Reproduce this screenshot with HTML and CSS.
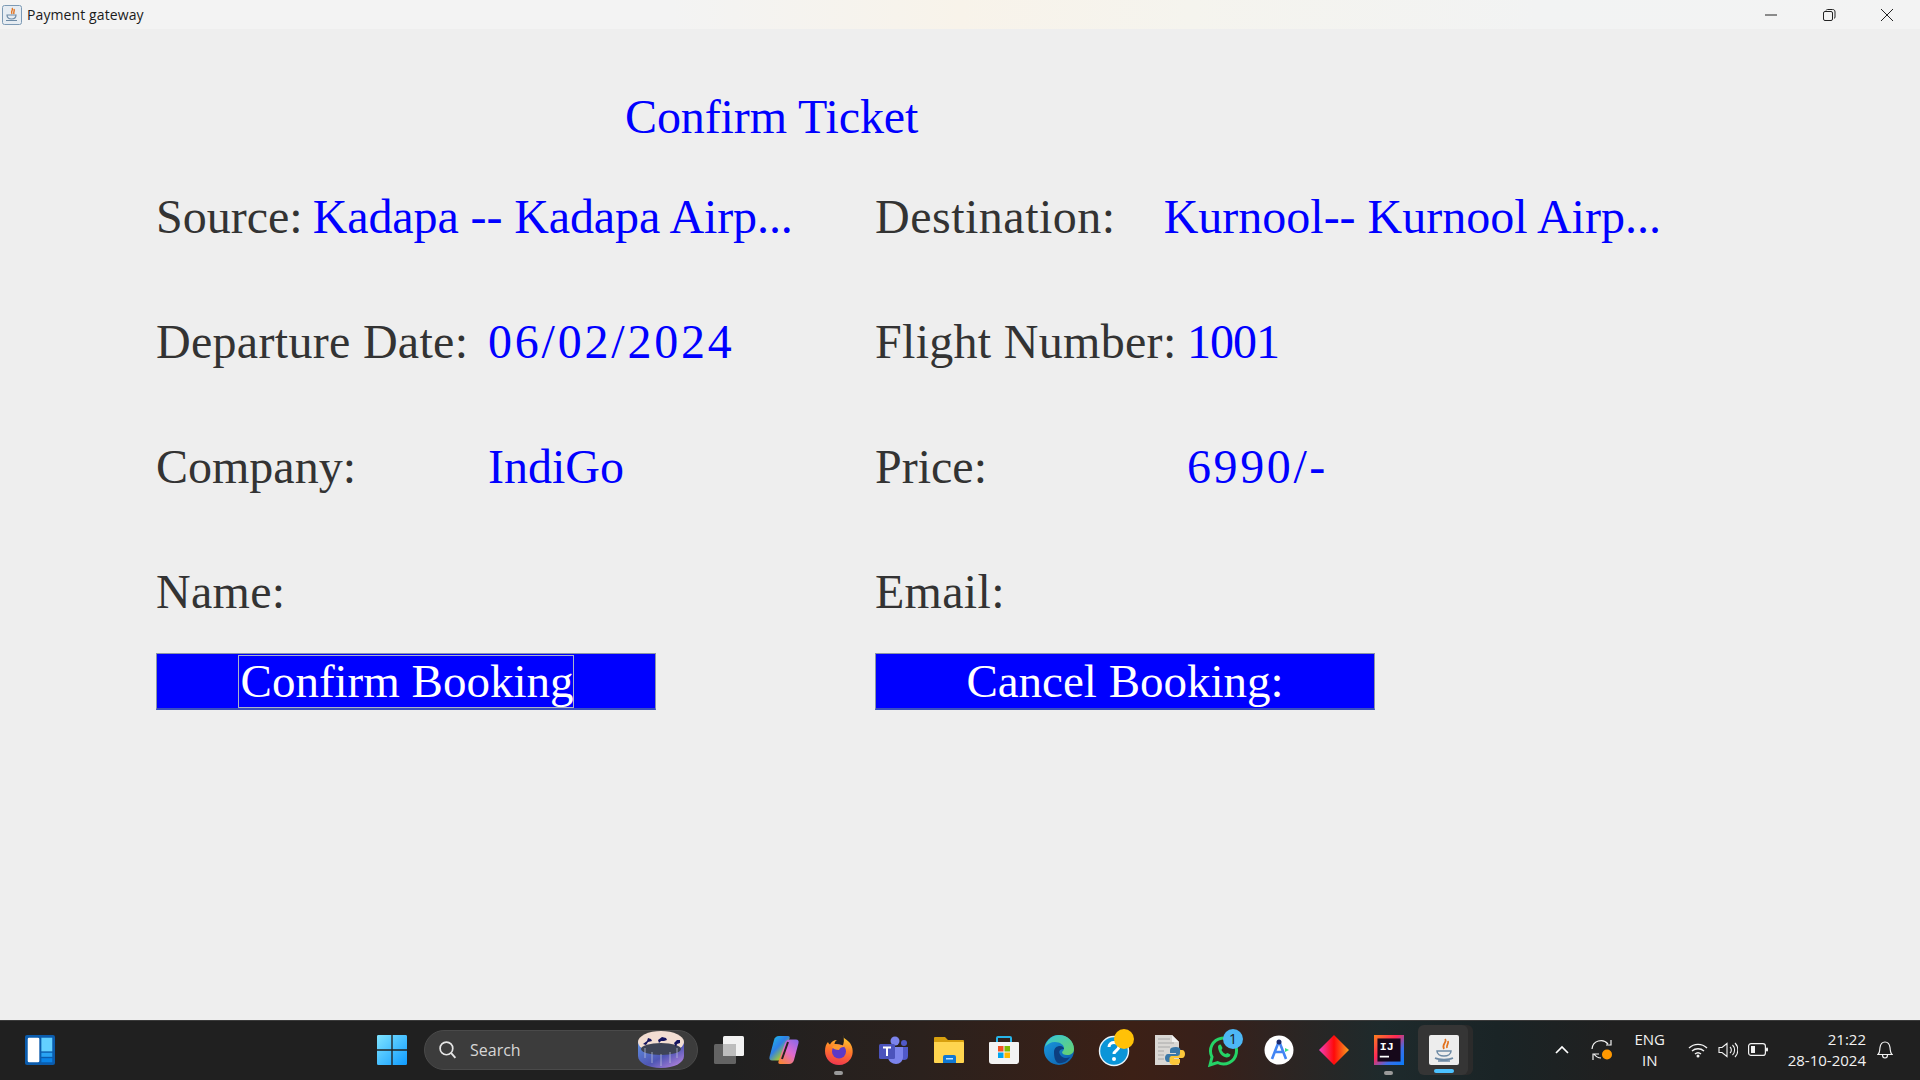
FILE: index.html
```html
<!DOCTYPE html>
<html lang="en">
<head>
<meta charset="utf-8">
<title>Payment gateway</title>
<link rel="stylesheet" href="styles.css">
</head>
<body>
<header class="titlebar">
  <svg class="app-icon" viewBox="0 0 20 20"><rect x=".5" y=".5" width="19" height="19" rx="2" fill="#e6ecf2" stroke="#7d9ab5"/><path d="M10 3c2 2-2 3 0 6M12 4c1 2-1 3 0 5" stroke="#e2711d" fill="none" stroke-width="1.4"/><path d="M5 10h9c0 3-2 4-4.500 4S5 13 5 10zM4 15.500h11" stroke="#6d8aa5" fill="none" stroke-width="1.200"/></svg>
  <span class="window-title">Payment gateway</span>
  <div class="window-controls">
    <svg class="win-btn" viewBox="0 0 14 14"><path d="M1 7h12" stroke="#222" stroke-width="1"/></svg>
    <svg class="win-btn" viewBox="0 0 14 14"><rect x="1.500" y="3.500" width="9" height="9" rx="1.500" fill="none" stroke="#222"/><path d="M4 2.500c.3-.7.8-1 1.500-1h5c1.700 0 2.500.8 2.500 2.500v5c0 .7-.3 1.200-1 1.500" fill="none" stroke="#222"/></svg>
    <svg class="win-btn" viewBox="0 0 14 14"><path d="M1 1l12 12M13 1L1 13" stroke="#222" stroke-width="1"/></svg>
  </div>
</header>

<main class="content">
  <h1 class="heading">Confirm Ticket</h1>
  <div class="info-grid">
    <div class="field"><span class="label">Source:</span><span class="value value-source">Kadapa -- Kadapa Airp...</span></div>
    <div class="field"><span class="label label-wider">Destination:</span><span class="value value-dest">Kurnool-- Kurnool Airp...</span></div>
    <div class="field"><span class="label label-wide label-left">Departure Date:</span><span class="value value-date">06/02/2024</span></div>
    <div class="field"><span class="label label-wide label-right">Flight Number:</span><span class="value value-narrow">1001</span></div>
    <div class="field"><span class="label label-left">Company:</span><span class="value">IndiGo</span></div>
    <div class="field"><span class="label label-right">Price:</span><span class="value value-price">6990/-</span></div>
    <div class="field"><span class="label label-wide">Name:</span></div>
    <div class="field"><span class="label label-wide">Email:</span></div>
  </div>
  <div class="actions">
    <button class="action"><span class="focus-ring">Confirm Booking</span></button>
    <button class="action"><span class="plain-label">Cancel Booking:</span></button>
  </div>
</main>

<footer class="taskbar">
  <svg class="widgets" viewBox="0 0 22 22"><rect width="22" height="22" rx="1.500" fill="#0b5cad"/><rect x="2" y="2" width="8.500" height="18" rx="1" fill="#fff"/><rect x="12" y="2" width="8" height="10" fill="#63d0ff"/><rect x="12" y="13" width="8" height="3" fill="#2aa4f4"/><rect x="12" y="17" width="8" height="3" fill="#0a84e8"/></svg>
  <div class="centre">
    <svg class="start" viewBox="0 0 22 22"><defs><linearGradient id="w" x1="0" y1="0" x2="1" y2="1"><stop offset="0" stop-color="#7fe4ff"/><stop offset="1" stop-color="#0f9bff"/></linearGradient></defs><path fill="url(#w)" d="M0 1a1 1 0 0 1 1-1h9.500v10.500H0zM11.500 0H21a1 1 0 0 1 1 1v9.500H11.500zM0 11.500h10.500V22H1a1 1 0 0 1-1-1zM11.500 11.500H22V21a1 1 0 0 1-1 1h-9.500z"/></svg>
    <div class="search">
      <svg class="search-icon" viewBox="0 0 18 18"><circle cx="8" cy="8" r="6" fill="none" stroke="#e6e6e6" stroke-width="1.600"/><path d="M12.500 12.500l4 4.500" stroke="#e6e6e6" stroke-width="1.800"/></svg>
      <span class="search-text">Search</span>
      <svg class="search-art" viewBox="0 0 48 40"><defs><linearGradient id="sa" x1="0" y1="0" x2="1" y2="1"><stop offset="0" stop-color="#5f8fe0"/><stop offset=".55" stop-color="#4f56b4"/><stop offset="1" stop-color="#c68be4"/></linearGradient></defs><path d="M1 12v14c0 7 10 12 23 12s23-5 23-12V12z" fill="url(#sa)"/><ellipse cx="24" cy="12" rx="23" ry="11" fill="#f2ddd2"/><ellipse cx="24" cy="19" rx="20" ry="6" fill="#3e4456"/><path d="M8 18v10M15 22v11M24 24v12M33 22v11M40 18v10" stroke="#c5cbe2" stroke-width="1" opacity=".7"/><path d="M6 14l4-3 1-3 3 1 1 2-4 1-2 3zM21 10l4-3 4 1 1 2-3 1-3 0-2 2zM37 13l3-3 3 0 0 3-3 1-1 3z" fill="#14145f"/></svg>
    </div>
    <div class="app-slot"><svg class="tb-icon" viewBox="0 0 30 30"><rect x="9" y="1" width="21" height="20" rx="1.500" fill="#f2f2f2"/><rect x="0" y="9" width="22" height="20" rx="1.500" fill="#6a6a6a" opacity=".9"/><rect x="9" y="9" width="13" height="12" fill="#bdbdbd"/></svg></div>
    <div class="app-slot"><svg class="tb-icon" viewBox="0 0 30 30"><defs><linearGradient id="c1" x1="0" y1="0" x2=".9" y2="1"><stop offset="0" stop-color="#19c4e8"/><stop offset=".45" stop-color="#2f7fe8"/><stop offset=".75" stop-color="#a0c43a"/><stop offset="1" stop-color="#f2c230"/></linearGradient><linearGradient id="c2" x1=".9" y1="0" x2=".2" y2="1"><stop offset="0" stop-color="#8a6ae8"/><stop offset=".5" stop-color="#e06ad0"/><stop offset="1" stop-color="#f9853a"/></linearGradient></defs><path d="M10 1h9c1.500 0 2 1 1.500 2.500L14 22c-1 2.500-2.500 3.500-5 3.500H3c-2 0-3-1.500-2.500-3.500L5 5c.8-2.500 2.500-4 5-4z" fill="url(#c1)"/><path d="M20 29h-9c-1.500 0-2-1-1.500-2.500L16 8c1-2.500 2.500-3.500 5-3.500h6c2 0 3 1.500 2.500 3.500L25 25c-.8 2.500-2.500 4-5 4z" fill="url(#c2)"/><path d="M19 7l-6 17" stroke="#2a2020" stroke-width="2"/></svg></div>
    <div class="app-slot has-dot"><svg class="tb-icon" viewBox="0 0 30 30"><defs><linearGradient id="ff" x1=".6" y1="0" x2=".4" y2="1"><stop offset="0" stop-color="#ffd02e"/><stop offset=".5" stop-color="#ff7a2a"/><stop offset="1" stop-color="#f0364f"/></linearGradient></defs><path d="M19 0c0 4 4 4 7 8 3 4 4 11 .5 16-3 4-7 6-11.500 6C7 30 1 24 1 16c0-4 1-7 3-9 .3 1 1 2 2 2.500C7 7 10 5 13 5c-1.500 1-2.500 2.500-2.500 4 4 0 6 .5 8 2.500 1.500-3.500 2-7 .5-11.500z" fill="url(#ff)"/><circle cx="15" cy="16.500" r="7" fill="#5d39c6"/><path d="M8 12c3-3 9-3.500 13 0-3-.5-5 .5-6 3-3 0-6-1-7-3z" fill="#ff9a2e"/></svg></div>
    <div class="app-slot"><svg class="tb-icon" viewBox="0 0 30 30"><circle cx="16" cy="6" r="4.500" fill="#7b83eb"/><circle cx="25" cy="8" r="3" fill="#5059c9"/><path d="M21 12h8v9c0 3-2 4-4 4s-4-1-4-4z" fill="#5059c9"/><path d="M9 12h15v10c0 4-3 7-7 7s-8-3-8-7z" fill="#7b83eb"/><rect x="0" y="9" width="16" height="15" rx="1.500" fill="#4b53bc"/><path d="M4 12.500h8M8 12.500v8.500" stroke="#fff" stroke-width="2"/></svg></div>
    <div class="app-slot"><svg class="tb-icon" viewBox="0 0 30 30"><path d="M0 3a1 1 0 0 1 1-1h10l3 3h15a1 1 0 0 1 1 1v4H0z" fill="#d8a00e"/><path d="M0 7h29a1 1 0 0 1 1 1v19a1 1 0 0 1-1 1H1a1 1 0 0 1-1-1z" fill="#ffd54f"/><path d="M9 28v-6a2 2 0 0 1 2-2h9a2 2 0 0 1 2 2v6z" fill="#0f78d4"/><rect x="12" y="23" width="7" height="1.500" fill="#bfe3ff"/></svg></div>
    <div class="app-slot"><svg class="tb-icon" viewBox="0 0 30 30"><path d="M8 7V3a1 1 0 0 1 1-1h12a1 1 0 0 1 1 1v4" fill="none" stroke="#27b4e8" stroke-width="2"/><path d="M1 7h28a1 1 0 0 1 1 1v18a3 3 0 0 1-3 3H3a3 3 0 0 1-3-3V8a1 1 0 0 1 1-1z" fill="#f3f3f3"/><rect x="9" y="11" width="5.500" height="5.500" fill="#f25022"/><rect x="15.500" y="11" width="5.500" height="5.500" fill="#7fba00"/><rect x="9" y="17.500" width="5.500" height="5.500" fill="#00a4ef"/><rect x="15.500" y="17.500" width="5.500" height="5.500" fill="#ffb900"/></svg></div>
    <div class="app-slot"><svg class="tb-icon" viewBox="0 0 30 30"><defs><linearGradient id="e1" x1="0" y1="0" x2="1" y2="1"><stop offset="0" stop-color="#36c6d8"/><stop offset="1" stop-color="#6ad36a"/></linearGradient><linearGradient id="e2" x1="0" y1="0" x2="1" y2="1"><stop offset="0" stop-color="#1b9de2"/><stop offset="1" stop-color="#0c5aa8"/></linearGradient></defs><circle cx="15" cy="15" r="15" fill="url(#e2)"/><path d="M1 12C3 4 9 0 15 0c8 0 15 6 15 14 0 4-3 6-7 6-3 0-5-1-5-3 1-1 2-2 2-4 0-3-4-6-9-6-4 0-8 2-10 5z" fill="url(#e1)"/><path d="M10 17c0-4 3-6 6-6 3 0 4 2 4 3-5 0-6 3-3 7 2 2 6 3 9 1-3 5-8 7-12 6-3-2-4-6-4-11z" fill="#0d3f80"/></svg></div>
    <div class="app-slot"><svg class="tb-icon over" viewBox="0 0 30 30"><circle cx="15" cy="16" r="14.500" fill="#0a95d8" stroke="#e8f4fb" stroke-width="1.400"/><path d="M10 12c0-3 2.500-4.500 5-4.500s5 1.500 5 4c0 4-5 4-5 7.500" fill="none" stroke="#fff" stroke-width="3"/><circle cx="15" cy="24" r="2" fill="#fff"/><circle cx="25" cy="4" r="10" fill="#ffc107"/></svg></div>
    <div class="app-slot"><svg class="tb-icon over" viewBox="0 0 30 30"><path d="M1 0h17l7 7v23H1z" fill="#d9d7d4"/><path d="M18 0v7h7z" fill="#f2f2f2"/><path d="M4 4h12M4 8h16M4 12h12M4 16h6M4 20h6M4 24h6" stroke="#a8a8a8" stroke-width="1"/><path d="M22 12c-4 0-6 1-6 3v3h6v1h-8c-2 0-3 2-3 4s1 4 3 4h2v-3c0-2 1-3 3-3h5c1.500 0 2.500-1 2.500-2.500V15c0-2-2-3-4.500-3z" fill="#3a78a8"/><path d="M22 12c-4 0-6 1-6 3v3h6v1h-8c-2 0-3 2-3 4s1 4 3 4h2v-3c0-2 1-3 3-3h5c1.500 0 2.500-1 2.500-2.500V15c0-2-2-3-4.500-3z" fill="#fcc73a" transform="rotate(180 21 21)"/></svg></div>
    <div class="app-slot"><svg class="tb-icon over" viewBox="0 0 30 30"><path d="M1 30l2-8a13 13 0 1 1 5.500 5.500z" fill="none" stroke="#25d366" stroke-width="3"/><path d="M9 12c0-2 2-3 3-2l1.500 3-1 2c1 2 2 3 4 4l2-1 3 1.500c0 2-2 3-4 3-5-1-8-5-8.500-10.500z" fill="#25d366"/><circle cx="24" cy="4" r="10" fill="#4db7f5"/><text class="badge-text" x="24" y="9">1</text></svg></div>
    <div class="app-slot"><svg class="tb-icon" viewBox="0 0 30 30"><circle cx="15" cy="15" r="14.500" fill="#fff"/><path d="M15 6L8 24M15 6l7 18M10 17h10" stroke="#4285f4" stroke-width="2.600" fill="none"/><circle cx="15" cy="7" r="2.500" fill="#1a2a6e"/><path d="M21 13l4 2-4 2z" fill="#3ddc84"/></svg></div>
    <div class="app-slot"><svg class="tb-icon" viewBox="0 0 30 30"><defs><linearGradient id="rd" x1="0" y1="0" x2="1" y2="0"><stop offset="0" stop-color="#f040c0"/><stop offset=".5" stop-color="#ff0a0a"/><stop offset="1" stop-color="#f8a020"/></linearGradient></defs><path d="M15 0l15 15-15 15L0 15z" fill="url(#rd)"/></svg></div>
    <div class="app-slot has-dot"><svg class="tb-icon" viewBox="0 0 26 26"><defs><linearGradient id="ij" x1="0" y1="0" x2="1" y2="1"><stop offset="0" stop-color="#fc801d"/><stop offset=".4" stop-color="#fe2857"/><stop offset=".7" stop-color="#3a6fe8"/><stop offset="1" stop-color="#087cfa"/></linearGradient></defs><rect width="26" height="26" fill="url(#ij)"/><rect x="3" y="3" width="20" height="20" fill="#16081a"/><text class="ij-text" x="5" y="13">IJ</text><rect x="5" y="18" width="8" height="1.500" fill="#fff"/></svg></div>
    <div class="app-slot active"><svg class="tb-icon" viewBox="0 0 30 30"><rect width="30" height="30" rx="2" fill="#ededed"/><path d="M16 4c3 3-4 5-1 10M19 6c1 3-2 4-1 7" fill="none" stroke="#e2711d" stroke-width="1.700"/><path d="M8 16h14c0 3-3 5-7 5s-7-2-7-5zM6 23c4 2 14 2 18 0M9 26h12" fill="none" stroke="#6d8aa5" stroke-width="1.500"/></svg></div>
  </div>
  <div class="tray">
    <svg class="tray-chev" viewBox="0 0 14 9"><path d="M1 8l6-6 6 6" fill="none" stroke="#fff" stroke-width="1.700"/></svg>
    <svg class="tray-sync" viewBox="0 0 22 22"><path d="M1 10a9 9 0 0 1 16-5M20 1v5h-5M3 15a9 9 0 0 0 7 4M2 21v-6h6" fill="none" stroke="#f2f2f2" stroke-width="1.200"/><circle cx="16" cy="15.500" r="5" fill="#ff9800"/></svg>
    <div class="lang"><span>ENG</span><span>IN</span></div>
    <svg class="tray-wifi" viewBox="0 0 20 16"><path d="M1 6a13 13 0 0 1 18 0M4 9a9 9 0 0 1 12 0M7 12a4.500 4.500 0 0 1 6 0" fill="none" stroke="#f2f2f2" stroke-width="1.400"/><circle cx="10" cy="14" r="1.500" fill="#f2f2f2"/></svg>
    <svg class="tray-vol" viewBox="0 0 20 16"><path d="M1 5.500h3l5-4v13l-5-4H1zM12 5a4 4 0 0 1 0 6M14.500 3a7 7 0 0 1 0 10M17 1a10 10 0 0 1 0 14" fill="none" stroke="#f2f2f2" stroke-width="1.100"/></svg>
    <svg class="tray-batt" viewBox="0 0 20 13"><rect x=".6" y=".6" width="16.800" height="11.800" rx="2.500" fill="none" stroke="#f2f2f2" stroke-width="1.200"/><rect x="3" y="3" width="4" height="7" fill="#f2f2f2"/><rect x="18" y="4.500" width="2" height="4" rx="1" fill="#f2f2f2"/></svg>
    <div class="clock"><span>21:22</span><span>28-10-2024</span></div>
    <svg class="tray-bell" viewBox="0 0 16 18"><path d="M1 13.500c2-1.500 1.500-4 2-7C3.500 3 5.500 1 8 1s4.500 2 5 5.500c.5 3 0 5.500 2 7zM5.500 14c0 4 5 4 5 0" fill="none" stroke="#f2f2f2" stroke-width="1.200"/></svg>
  </div>
</footer>
</body>
</html>
```
FILE: styles.css
```css
* { box-sizing: border-box; }
html, body { margin: 0; height: 100%; }
body {
  width: 1920px;
  height: 1080px;
  overflow: hidden;
  display: flex;
  flex-direction: column;
  background: #eeeeee;
  font-family: "Liberation Serif", serif;
}

/* title bar */
.titlebar {
  height: 29px;
  flex: none;
  display: flex;
  align-items: center;
  padding-left: 2px;
  background: linear-gradient(90deg, #f3f3f3 0%, #f3f3f3 35%, #f8f3ea 50%, #f5f4ee 62%, #f2f3f3 80%, #f3f3f3 100%);
}
.app-icon { width: 20px; height: 20px; flex: none; }
.window-title {
  margin-left: 5px;
  font: 14px "Open Sans", "Noto Sans", sans-serif;
  letter-spacing: .1px;
  color: #1a1a1a;
}
.window-controls {
  margin-left: auto;
  display: flex;
  gap: 44px;
  padding-right: 26px;
  align-items: center;
}
.win-btn { width: 14px; height: 14px; display: block; }

/* content */
.content {
  flex: 1;
  padding: 57px 0 0 156px;
}
.heading {
  margin: 0 0 37px 469px;
  font-weight: 400;
  font-size: 48px;
  line-height: 62px;
  letter-spacing: -.1px;
  color: #0000ff;
}
.info-grid {
  display: grid;
  grid-template-columns: 719px 1fr;
  row-gap: 63px;
}
.field {
  display: flex;
  align-items: center;
  height: 62px;
  font-size: 48px;
}
.label { color: #333333; white-space: nowrap; }
.label-wide { letter-spacing: .3px; }
.label-wider { letter-spacing: .5px; }
.label-left { width: 332px; flex: none; }
.label-right { width: 312px; flex: none; }
.value { color: #0000ff; white-space: nowrap; }
.value-source { margin-left: 10px; letter-spacing: -.1px; }
.value-dest { margin-left: 48px; }
.value-date { letter-spacing: 2.800px; }
.value-narrow { letter-spacing: -1px; }
.value-price { letter-spacing: 2.600px; }

.actions {
  margin-top: 31px;
  display: grid;
  grid-template-columns: 719px 1fr;
}
.action {
  width: 500px;
  height: 57px;
  padding: 1px 0 0;
  border: 1px solid #8a94a8;
  border-bottom: 2px solid #3a4fc0;
  background: #0000ff;
  color: #ffffff;
  font-family: "Liberation Serif", serif;
  font-size: 47px;
  display: flex;
  justify-content: center;
  align-items: center;
}
.focus-ring {
  height: 53px;
  line-height: 51px;
  padding: 0 0 0 2px;
  border: 1px solid #a9b4c8;
  display: block;
}
.plain-label { display: block; line-height: 53px; }

/* taskbar */
.taskbar {
  flex: none;
  position: relative;
  height: 60px;
  display: flex;
  align-items: center;
  padding-bottom: 2px;
  border-top: 1px solid #3a3a3a;
  background: linear-gradient(90deg, #202020 0%, #202020 38%, #2b211d 48%, #3c2016 59%, #38201a 63%, #1e2a2c 72%, #1a2426 78%, #202020 84%, #202020 100%);
  color: #f2f2f2;
}
.widgets { width: 30px; height: 30px; margin-left: 25px; flex: none; }
.centre {
  margin-left: 321px;
  display: flex;
  align-items: center;
  flex: none;
}
.start { width: 30px; height: 30px; flex: none; margin-left: 1px; }
.search {
  margin-left: 17px;
  width: 274px;
  height: 40px;
  border-radius: 20px;
  background: #3c3c3c;
  border: 1px solid #4a4a4a;
  display: flex;
  align-items: center;
  padding: 0 12px 0 13px;
}
.search-icon { width: 19px; height: 19px; flex: none; }
.search-text {
  margin-left: 13px;
  font: 16px "Open Sans", "Noto Sans", sans-serif;
  color: #d6d6d6;
}
.search-art { width: 48px; height: 40px; margin-left: auto; }
.app-slot {
  position: relative;
  width: 55px;
  height: 50px;
  display: flex;
  align-items: center;
  justify-content: center;
  flex: none;
}
.search + .app-slot { margin-left: 3px; }
.tb-icon { width: 30px; height: 30px; display: block; }
.over { overflow: visible; }
.has-dot::after {
  content: "";
  position: absolute;
  left: 23px;
  bottom: 0;
  width: 9px;
  height: 4px;
  border-radius: 2px;
  background: #9a9a9a;
}
.active::before {
  content: "";
  position: absolute;
  left: 2px;
  top: 0;
  width: 50px;
  height: 50px;
  border-radius: 6px;
  background: #353535;
  box-shadow: 5px 0 0 #2b2b2b;
}
.active .tb-icon { position: relative; }
.active::after {
  content: "";
  position: absolute;
  left: 18px;
  bottom: 2px;
  width: 20px;
  height: 4px;
  border-radius: 2px;
  background: #4cc2ff;
}
.badge-text { font: 14px "Open Sans", sans-serif; fill: #1a1a1a; text-anchor: middle; }
.ij-text { font: 700 10px "Liberation Mono", monospace; fill: #fff; }

.tray {
  position: absolute;
  right: 0;
  top: 0;
  height: 57px;
  display: flex;
  align-items: center;
}
.tray-chev { width: 14px; height: 9px; }
.tray-sync { width: 22px; height: 22px; margin-left: 22px; }
.lang {
  width: 44px;
  margin-left: 15px;
  display: flex;
  flex-direction: column;
  align-items: center;
  font: 15px/21px "Open Sans", "Noto Sans", sans-serif;
}
.tray-wifi { width: 20px; height: 16px; margin-left: 16px; }
.tray-vol { width: 20px; height: 16px; margin-left: 10px; }
.tray-batt { width: 20px; height: 13px; margin-left: 10px; }
.clock {
  margin-left: 20px;
  display: flex;
  flex-direction: column;
  align-items: flex-end;
  font: 15px/21px "Open Sans", "Noto Sans", sans-serif;
}
.tray-bell { width: 16px; height: 18px; margin: 0 27px 0 11px; }
```
